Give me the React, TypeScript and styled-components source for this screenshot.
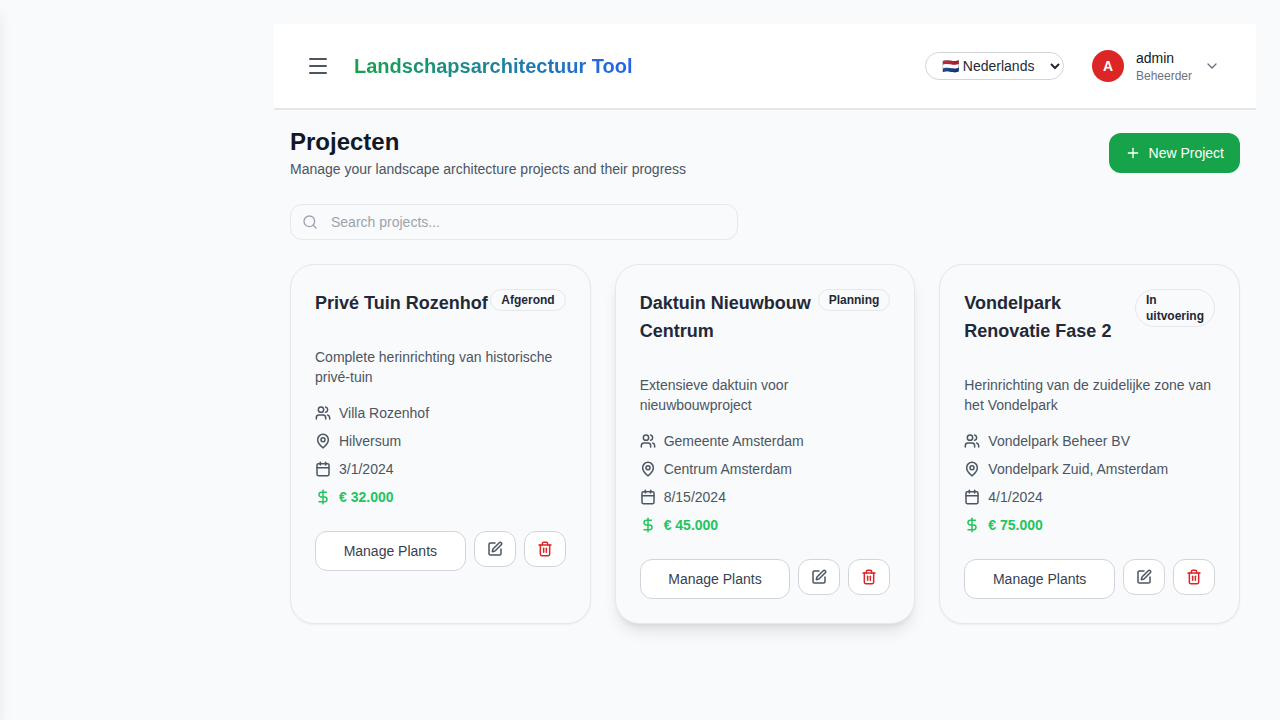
import styled, { createGlobalStyle } from "styled-components";
import { Calendar, ChevronDown, DollarSign, MapPin, Menu, Plus, Search, SquarePen, Trash2, Users } from "lucide-react";

const GlobalStyle = createGlobalStyle`
    * {
        box-sizing: border-box;
    }

    body {
        margin: 0;
        background: #f9fafb;
        color: #111827;
        font-family: "Liberation Sans", Arial, sans-serif;
    }
`

const Sidebar = styled.aside`
    position: fixed;
    top: 0;
    left: -250px;
    width: 250px;
    height: 100vh;
    background: #ffffff;
    box-shadow: 0 10px 15px -3px rgba(0, 0, 0, .1), 0 4px 6px -4px rgba(0, 0, 0, .1);
`

const Main = styled.main`
    margin-left: 250px;
    padding: 24px;
`

const TopBar = styled.header`
    display: flex;
    align-items: center;
    justify-content: space-between;
    height: 86px;
    padding: 0 24px;
    background: #ffffff;
    border-bottom: 2px solid #e5e7eb;
`

const BarGroup = styled.div`
    display: flex;
    align-items: center;
`

const MenuButton = styled.button`
    display: flex;
    padding: 8px;
    margin-right: 16px;
    border: 0;
    background: none;
    color: #4b5563;
`

const Brand = styled.h1`
    margin: 0;
    font-size: 20px;
    line-height: 28px;
    font-weight: 700;
    background: linear-gradient(to right, #16a34a, #2563eb);
    -webkit-background-clip: text;
    background-clip: text;
    color: transparent;
`

const LanguageSelect = styled.select`
    width: 139px;
    height: 28px;
    padding: 0 4px 0 12px;
    margin-right: 16px;
    border: 1px solid #d1d5db;
    border-radius: 9999px;
    background: #ffffff;
    color: #1f2937;
    font-family: inherit;
    font-size: 14px;
`

const UserButton = styled.div`
    display: flex;
    align-items: center;
    gap: 12px;
    padding: 8px 12px;
    color: #6b7280;
`

const Avatar = styled.div`
    display: flex;
    align-items: center;
    justify-content: center;
    width: 32px;
    height: 32px;
    border-radius: 50%;
    background: #dc2626;
    color: #ffffff;
    font-size: 14px;
    font-weight: 700;
`

const UserName = styled.div`
    font-size: 14px;
    line-height: 20px;
    color: #111827;
`

const UserRole = styled.div`
    font-size: 12px;
    line-height: 16px;
    color: #6b7280;
`

const Content = styled.section`
    padding: 16px;
`

const PageHead = styled.div`
    display: flex;
    align-items: center;
    justify-content: space-between;
    margin-bottom: 24px;
`

const PageTitle = styled.h2`
    margin: 0;
    font-size: 24px;
    line-height: 32px;
    font-weight: 700;
    color: #111827;
`

const PageText = styled.p`
    margin: 0;
    font-size: 14px;
    line-height: 22px;
    color: #4b5563;
`

const NewButton = styled.button`
    display: flex;
    align-items: center;
    gap: 8px;
    height: 40px;
    padding: 0 16px;
    border: 0;
    border-radius: 12px;
    background: #16a34a;
    color: #ffffff;
    font-family: inherit;
    font-size: 14px;
`

const SearchBox = styled.label`
    display: flex;
    align-items: center;
    gap: 13px;
    width: 448px;
    height: 36px;
    padding: 0 11px;
    margin-bottom: 24px;
    border: 1px solid #e5e7eb;
    border-radius: 12px;
    color: #9ca3af;
`

const SearchInput = styled.input`
    flex: 1;
    min-width: 0;
    padding: 0;
    border: 0;
    outline: 0;
    background: none;
    font-family: inherit;
    font-size: 14px;

    &::placeholder {
        color: #9ca3af;
    }
`

const CardGrid = styled.div`
    display: grid;
    grid-template-columns: repeat(3, 1fr);
    gap: 24px;
`

const Card = styled.article<{ $raised?: boolean }>`
    padding: 24px;
    border: 1px solid #e5e7eb;
    border-radius: 24px;
    background: #f9fafb;
    box-shadow: ${(p) => p.$raised
        ? "0 10px 15px -3px rgba(0, 0, 0, .1), 0 4px 6px -4px rgba(0, 0, 0, .1)"
        : "0 1px 2px 0 rgba(0, 0, 0, .05)"};
`

const CardHead = styled.div`
    display: flex;
    align-items: flex-start;
    justify-content: space-between;
    margin-bottom: 30px;
`

const CardTitle = styled.h3`
    margin: 0;
    font-size: 18px;
    line-height: 28px;
    font-weight: 700;
    color: #1f2937;
`

const Badge = styled.span`
    padding: 2px 10px;
    border: 1px solid #e5e7eb;
    border-radius: 9999px;
    font-size: 12px;
    line-height: 16px;
    font-weight: 700;
    color: #1f2937;
`

const Description = styled.p`
    margin: 0 0 16px;
    font-size: 14px;
    line-height: 20px;
    color: #4b5563;
`

const Details = styled.div`
    display: flex;
    flex-direction: column;
    gap: 8px;
    margin-bottom: 24px;
`

const Detail = styled.div<{ $price?: boolean }>`
    display: flex;
    align-items: center;
    gap: 8px;
    font-size: 14px;
    line-height: 20px;
    font-weight: ${(p) => (p.$price ? 700 : 400)};
    color: ${(p) => (p.$price ? "#22c55e" : "#4b5563")};

    svg {
        stroke-width: 2.25;
    }
`

const Actions = styled.div`
    display: flex;
    align-items: flex-start;
    gap: 8px;
`

const PlantsButton = styled.button`
    flex: 1;
    height: 40px;
    border: 1px solid #d1d5db;
    border-radius: 12px;
    background: #ffffff;
    color: #374151;
    font-family: inherit;
    font-size: 14px;
`

const IconButton = styled.button<{ $danger?: boolean }>`
    display: flex;
    align-items: center;
    justify-content: center;
    width: 42px;
    height: 36px;
    padding: 0;
    border: 1px solid #d1d5db;
    border-radius: 12px;
    background: #ffffff;
    color: ${(p) => (p.$danger ? "#dc2626" : "#4b5563")};

    svg {
        stroke-width: 2.25;
    }
`

const projects = [
    {
        title: "Privé Tuin Rozenhof",
        status: "Afgerond",
        text: "Complete herinrichting van historische privé-tuin",
        client: "Villa Rozenhof",
        place: "Hilversum",
        date: "3/1/2024",
        budget: "€ 32.000",
    },
    {
        title: "Daktuin Nieuwbouw Centrum",
        status: "Planning",
        text: "Extensieve daktuin voor nieuwbouwproject",
        client: "Gemeente Amsterdam",
        place: "Centrum Amsterdam",
        date: "8/15/2024",
        budget: "€ 45.000",
        raised: true,
    },
    {
        title: "Vondelpark Renovatie Fase 2",
        status: "In uitvoering",
        text: "Herinrichting van de zuidelijke zone van het Vondelpark",
        client: "Vondelpark Beheer BV",
        place: "Vondelpark Zuid, Amsterdam",
        date: "4/1/2024",
        budget: "€ 75.000",
    },
];

const App = () => {

    return (
        <>
            <GlobalStyle />
            <Sidebar />
            <Main>
                <TopBar>
                    <BarGroup>
                        <MenuButton aria-label="Menu">
                            <Menu size={24} />
                        </MenuButton>
                        <Brand>Landschapsarchitectuur Tool</Brand>
                    </BarGroup>
                    <BarGroup>
                        <LanguageSelect defaultValue="nl">
                            <option value="nl">🇳🇱 Nederlands</option>
                            <option value="en">🇬🇧 English</option>
                        </LanguageSelect>
                        <UserButton>
                            <Avatar>A</Avatar>
                            <div>
                                <UserName>admin</UserName>
                                <UserRole>Beheerder</UserRole>
                            </div>
                            <ChevronDown size={16} />
                        </UserButton>
                    </BarGroup>
                </TopBar>
                <Content>
                    <PageHead>
                        <div>
                            <PageTitle>Projecten</PageTitle>
                            <PageText>Manage your landscape architecture projects and their progress</PageText>
                        </div>
                        <NewButton>
                            <Plus size={16} />
                            New Project
                        </NewButton>
                    </PageHead>
                    <SearchBox>
                        <Search size={16} />
                        <SearchInput placeholder="Search projects..." />
                    </SearchBox>
                    <CardGrid>
                        {projects.map((project) => (
                            <Card key={project.title} $raised={project.raised}>
                                <CardHead>
                                    <CardTitle>{project.title}</CardTitle>
                                    <Badge>{project.status}</Badge>
                                </CardHead>
                                <Description>{project.text}</Description>
                                <Details>
                                    <Detail><Users size={16} />{project.client}</Detail>
                                    <Detail><MapPin size={16} />{project.place}</Detail>
                                    <Detail><Calendar size={16} />{project.date}</Detail>
                                    <Detail $price><DollarSign size={16} />{project.budget}</Detail>
                                </Details>
                                <Actions>
                                    <PlantsButton>Manage Plants</PlantsButton>
                                    <IconButton aria-label="Edit"><SquarePen size={16} /></IconButton>
                                    <IconButton $danger aria-label="Delete"><Trash2 size={16} /></IconButton>
                                </Actions>
                            </Card>
                        ))}
                    </CardGrid>
                </Content>
            </Main>
        </>
    )
}

export default App;
